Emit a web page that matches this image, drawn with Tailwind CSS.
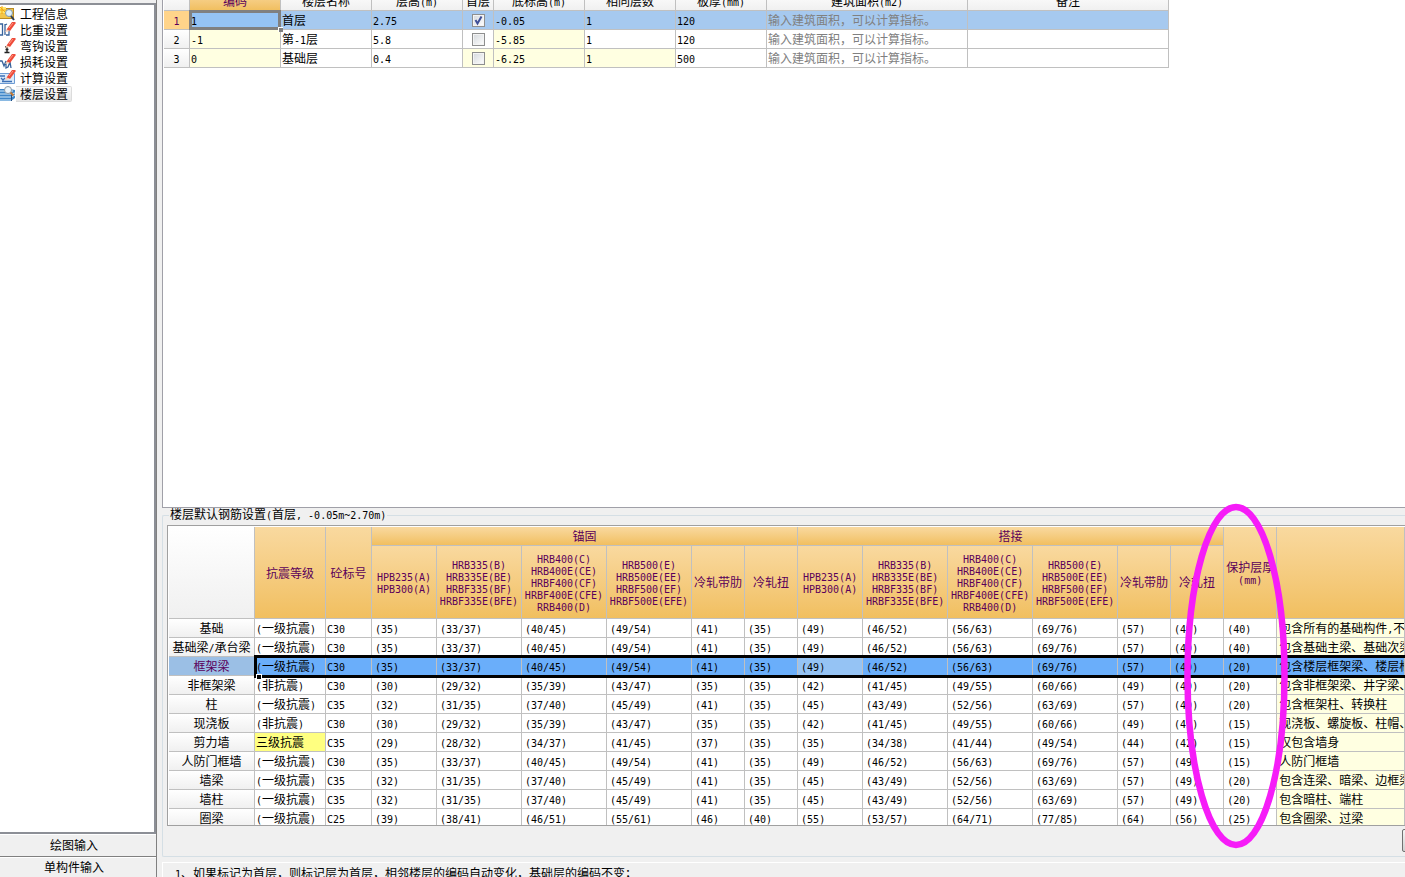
<!DOCTYPE html>
<html lang="zh-CN">
<head>
<meta charset="utf-8">
<title>楼层设置</title>
<script src="https://cdn.jsdelivr.net/npm/@tailwindcss/browser@4"></script>
</head>
<body class="h-screen overflow-hidden flex bg-[#f0f0f0] font-['Noto_Sans_CJK_SC',sans-serif] text-[12px] leading-[12px] text-black whitespace-nowrap">

<aside class="w-[157px] shrink-0 flex flex-col border-r border-[#808080]">
  <nav class="mt-[3px] flex-1 bg-white border-t-2 border-b-2 border-r-2 border-[#8c8f96] overflow-hidden">
    <ul>
      <li><a href="#" class="flex h-4 items-center mt-px">
        <svg class="w-4 h-4 shrink-0" viewBox="0 0 16 16"><rect x="-1" y="2.500" width="14.500" height="10" fill="#f3c64a" stroke="#b98a22"/><path d="M0 1h6v6H0z" fill="#ffe66b"/><path d="M2 0v8M0 4h7M0 1l5 5" stroke="#f3a712"/><circle cx="9" cy="7" r="3.500" fill="#dff1fb" stroke="#8297a8"/><path d="M11 10l3 4" stroke="#2c3d57" stroke-width="2"/></svg>
        <span class="pl-1">工程信息</span></a></li>
      <li><a href="#" class="flex h-4 items-center">
        <svg class="w-4 h-4 shrink-0" viewBox="0 0 16 16"><path d="M0 2h2.500v11H0M5 2v11M5 3l2-1M9 8v5H6" fill="none" stroke="#38639c" stroke-width="1.300"/><path d="M6.500 7.500L12 0h3.500v1.500L10 9z" fill="#ee4b3a"/><path d="M9 6l4-5" stroke="#ff9a86"/><path d="M5 10l1.500-2.500L10 9z" fill="#f6c9b0"/></svg>
        <span class="pl-1">比重设置</span></a></li>
      <li><a href="#" class="flex h-4 items-center">
        <svg class="w-4 h-4 shrink-0" viewBox="0 0 16 16"><path d="M5 9h2v5M4.500 14.500h5M5.500 11.500h3" fill="none" stroke="#222" stroke-width="1.400"/><path d="M6.500 7.500L12 0h3.500v1.500L10 9z" fill="#ee4b3a"/><path d="M9 6l4-5" stroke="#ff9a86"/><path d="M5 10l1.500-2.500L10 9z" fill="#f6c9b0"/></svg>
        <span class="pl-1">弯钩设置</span></a></li>
      <li><a href="#" class="flex h-4 items-center">
        <svg class="w-4 h-4 shrink-0" viewBox="0 0 16 16"><path d="M0 7h2l2 5 2-5v7l2-1 2-5 1 6" fill="none" stroke="#38639c" stroke-width="1.300"/><path d="M6.500 7.500L12 0h3.500v1.500L10 9z" fill="#ee4b3a"/><path d="M9 6l4-5" stroke="#ff9a86"/><path d="M5 10l1.500-2.500L10 9z" fill="#f6c9b0"/></svg>
        <span class="pl-1">损耗设置</span></a></li>
      <li><a href="#" class="flex h-4 items-center">
        <svg class="w-4 h-4 shrink-0" viewBox="0 0 16 16"><path d="M-1 3.500h15.500v10H-1" fill="#dcebfa" stroke="#6d9bd3"/><path d="M0 6h5M1 8l2 2 2-2M2 11.500h10" fill="none" stroke="#3b6fb5" stroke-width="1.300"/><path d="M6.500 7.500L12 0h3.500v1.500L10 9z" fill="#ee4b3a"/><path d="M9 6l4-5" stroke="#ff9a86"/><path d="M5 10l1.500-2.500L10 9z" fill="#f6c9b0"/></svg>
        <span class="pl-1">计算设置</span></a></li>
      <li><a href="#" class="flex h-4 items-center" aria-current="page">
        <svg class="w-4 h-4 shrink-0" viewBox="0 0 16 16"><path d="M0 3h10l5 1v8l-4 3H0z" fill="#3f86c8"/><path d="M0 5h13M0 8h11l4-1M0 11h11l4-2M0 14h11" fill="none" stroke="#d5ecfb"/><path d="M11.500 6v9" stroke="#1f4d83"/><circle cx="8" cy="4" r="3.500" fill="#eef6fb" stroke="#8a99a6"/><path d="M10.500 6.500l3 3" stroke="#c07a3a" stroke-width="2"/></svg>
        <span class="h-4 flex items-center pl-1 pr-[3px] rounded-r-xs border border-l-0 border-[#dcdcdc] bg-linear-to-b from-[#fafafa] to-[#e6e6e6]">楼层设置</span></a></li>
    </ul>
  </nav>
  <button type="button" class="h-[23px] pr-2 border-b border-[#808080] shadow-[inset_0_1px_0_#fff]">绘图输入</button>
  <button type="button" class="h-[20px] pr-2 shadow-[inset_0_1px_0_#fff]">单构件输入</button>
</aside>

<main class="flex-1 min-w-0 ml-[5px] flex flex-col">
  <section class="flex-1 min-h-0 overflow-hidden bg-white border-l border-b border-[#a0a0a8] pl-px">
    <table class="table-fixed border-separate border-spacing-0 w-[1005px] -mt-[9px]">
      <colgroup><col class="w-[26px]"><col class="w-[91px]"><col class="w-[91px]"><col class="w-[91px]"><col class="w-[31px]"><col class="w-[91px]"><col class="w-[91px]"><col class="w-[91px]"><col class="w-[201px]"><col class="w-[201px]"></colgroup>
      <thead id="floorHead"></thead>
      <tbody id="floors"></tbody>
    </table>
  </section>

  <fieldset class="min-w-0 border border-r-0 border-[#d5dfe5] rounded-l-xs pb-[30px] pl-1">
    <legend class="ml-0.5 px-px h-[14px] leading-[12px]" id="legend"></legend>
    <div class="mt-[3px] h-[301px] overflow-hidden border border-r-0 border-[#a0a0a0] bg-white pl-px pt-px">
      <table class="table-fixed border-separate border-spacing-0 w-full">
        <colgroup><col class="w-[86px]"><col class="w-[71px]"><col class="w-[46px]"><col class="w-[65px]"><col class="w-[85px]"><col class="w-[85px]"><col class="w-[85px]"><col class="w-[53px]"><col class="w-[53px]"><col class="w-[65px]"><col class="w-[85px]"><col class="w-[85px]"><col class="w-[85px]"><col class="w-[53px]"><col class="w-[53px]"><col class="w-[53px]"><col></colgroup>
        <thead id="barHead"></thead>
        <tbody id="bars"></tbody>
      </table>
    </div>
    <div class="relative"><button type="button" aria-label="恢复默认值" class="absolute top-[3px] -right-[21px] w-[24px] h-[23px] rounded-xs border border-[#707070] bg-linear-to-b from-[#f4f4f4] to-[#d0d0d0]"></button></div>
  </fieldset>

  <section class="mt-[5px] h-[15px] overflow-hidden border-t border-l border-white pl-3 pt-1">
    <p id="note"></p>
  </section>
</main>

<svg class="absolute left-[1183px] top-[502px] w-[107px] h-[348px] pointer-events-none z-20" viewBox="0 0 107 348" aria-hidden="true"><ellipse cx="53" cy="174" rx="48.500" ry="169" fill="none" stroke="#f61cf8" stroke-width="6.500"/></svg>

<script>
// Latin runs use a monospaced face half as wide as a Chinese character.
const t = s => String(s).replace(/[\x20-\x7e]+/g, m => `<span class="font-['DejaVu_Sans_Mono',monospace] text-[10px] leading-[0px] whitespace-pre">${m}</span>`);
const $ = id => document.getElementById(id);

$('legend').innerHTML = t('楼层默认钢筋设置(首层, -0.05m~2.70m)');
$('note').innerHTML = t('1、如果标记为首层，则标记层为首层，相邻楼层的编码自动变化，基础层的编码不变；');

const line = 'border-r border-b border-[#c0c0c0] p-0 font-normal overflow-hidden ';
const grey = 'bg-linear-to-b from-white to-[#f0f0f0] ';
const gold = 'bg-linear-to-b from-[#f9d99f] to-[#f1bf5f] text-[#5a005a] ';

$('floorHead').innerHTML = '<tr class="h-[20px]">' + ['', '编码', '楼层名称', '层高(m)', '首层', '底标高(m)', '相同层数', '板厚(mm)', '建筑面积(m2)', '备注']
  .map((h, i) => `<th class="${line} ${i === 1 ? gold : grey}">${t(h)}</th>`).join('') + '</tr>';

const hint = '输入建筑面积，可以计算指标。';
$('floors').innerHTML = [
  ['1', '首层', '2.75', true, '-0.05', '1', '120'],
  ['-1', '第-1层', '5.8', false, '-5.85', '1', '120'],
  ['0', '基础层', '0.4', false, '-6.25', '1', '500']
].map((r, i) => {
  const pale = 'bg-[#ffffe1] ';
  const on = i === 0;
  const cell = (s, c) => `<td class="${line} pl-px ${on ? '' : c}">${t(s)}</td>`;
  return `<tr class="h-[19px] ${on ? 'bg-[#a6c9ef]' : ''}">
    <th class="${line} ${on ? 'bg-[#ffd48a] text-[#5a005a]' : grey}">${t(i + 1)}</th>
    ${on ? `<td class="relative border-r border-b border-[#c0c0c0] p-0 pl-px bg-[#95c3f4]">${t(r[0])}<span class="absolute -left-px -top-px -right-px -bottom-px border-3 border-[#808080]"></span><span class="absolute -right-[3px] -bottom-[3px] size-[5px] bg-[#808080] border-t border-l border-white"></span></td>` : cell(r[0], pale)}
    ${cell(r[1], '')}${cell(r[2], '')}
    <td class="${line} ${i === 2 ? pale : ''}"><label class="flex justify-center"><input type="checkbox" aria-label="首层" ${r[3] ? 'checked' : ''} class="peer appearance-none size-[13px] border border-[#8e8f8f] bg-linear-to-br from-[#d4d8dc] to-white shadow-[inset_0_0_0_1px_#f4f4f4]"><svg class="hidden peer-checked:block absolute size-[13px]" viewBox="0 0 13 13"><path d="M3.500 6l2 3.500L9.500 2.500" fill="none" stroke="#3f5098" stroke-width="2"/></svg></label></td>
    ${cell(r[4], pale)}${cell(r[5], i === 2 ? pale : '')}${cell(r[6], '')}
    <td class="${line} pl-px text-[#808080]">${t(hint)}</td><td class="${line}"></td></tr>`;
}).join('');

const th = (s, attr = '', c = gold) => `<th ${attr} class="${line} ${c}">${s.split('|').map(t).join('<br>')}</th>`;
const kinds = ['HPB235(A)|HPB300(A)', 'HRB335(B)|HRB335E(BE)|HRBF335(BF)|HRBF335E(BFE)', 'HRB400(C)|HRB400E(CE)|HRBF400(CF)|HRBF400E(CFE)|RRB400(D)', 'HRB500(E)|HRB500E(EE)|HRBF500(EF)|HRBF500E(EFE)', '冷轧带肋', '冷轧扭'];
$('barHead').innerHTML = `<tr class="h-[19px]">${th('', 'rowspan="2"', grey)}${th('抗震等级', 'rowspan="2"')}${th('砼标号', 'rowspan="2"')}${th('锚固', 'colspan="6"')}${th('搭接', 'colspan="6"')}${th('保护层厚|(mm)', 'rowspan="2"')}${th('', 'rowspan="2"')}</tr><tr class="h-[73px]">${[...kinds, ...kinds].map(k => th(k)).join('')}</tr>`;

const A = '35 33/37 40/45 49/54 41 35 49 46/52 56/63 69/76 57 49';
const B = '30 29/32 35/39 43/47 35 35 42 41/45 49/55 60/66 49 49';
const C = '32 31/35 37/40 45/49 41 35 45 43/49 52/56 63/69 57 49';
$('bars').innerHTML = [
  ['基础', '(一级抗震)', 'C30', A, 40, '包含所有的基础构件,不含基础梁'],
  ['基础梁/承台梁', '(一级抗震)', 'C30', A, 40, '包含基础主梁、基础次梁、承台梁'],
  ['框架梁', '(一级抗震)', 'C30', A, 20, '包含楼层框架梁、楼层框架扁梁'],
  ['非框架梁', '(非抗震)', 'C30', B, 20, '包含非框架梁、井字梁、基础联系梁'],
  ['柱', '(一级抗震)', 'C35', C, 20, '包含框架柱、转换柱'],
  ['现浇板', '(非抗震)', 'C30', B, 15, '现浇板、螺旋板、柱帽、空心楼盖板'],
  ['剪力墙', '三级抗震', 'C35', '29 28/32 34/37 41/45 37 35 35 34/38 41/44 49/54 44 42', 15, '仅包含墙身'],
  ['人防门框墙', '(一级抗震)', 'C30', A, 15, '人防门框墙'],
  ['墙梁', '(一级抗震)', 'C35', C, 20, '包含连梁、暗梁、边框梁'],
  ['墙柱', '(一级抗震)', 'C35', C, 20, '包含暗柱、端柱'],
  ['圈梁', '(一级抗震)', 'C25', '39 38/41 46/51 55/61 46 40 55 53/57 64/71 77/85 64 56', 25, '包含圈梁、过梁']
].map((r, i) => {
  const on = i === 2;
  const frame = on ? '<span class="absolute z-10 left-[85px] -right-1 -top-[2px] -bottom-[2px] border-3 border-black"></span><span class="absolute z-10 left-[87px] -bottom-[4px] size-[6px] bg-black border border-white"></span>' : '';
  return `<tr class="h-[19px] ${on ? 'relative bg-[#6aaefa]' : ''}"><th class="${line} ${on ? 'bg-[#9bbfe5] text-[#5a005a]' : grey}">${t(r[0])}${frame}</th>
    <td class="${line} pl-px ${i === 6 ? 'bg-[#ffff80]' : ''}">${t(r[1])}</td><td class="${line} pl-px">${t(r[2])}</td>
    ${[...r[3].split(' '), r[4]].map((v, j) => `<td class="${line} pl-[3px] ${on && j === 6 ? 'bg-[#95c3f4]' : ''}">${t('(' + v + ')')}</td>`).join('')}
    <td class="${line} pl-0.5 ${on ? '' : 'bg-[#ffffe1]'}">${t(r[5])}</td></tr>`;
}).join('');
</script>
</body>
</html>
